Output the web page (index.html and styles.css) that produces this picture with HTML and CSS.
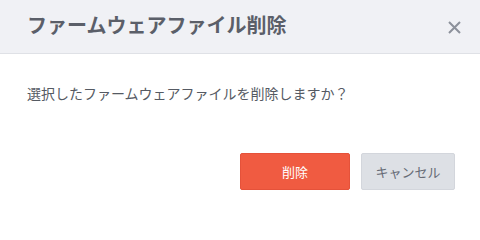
FILE: index.html
```html
<!DOCTYPE html>
<html lang="ja">
<head>
<meta charset="utf-8">
<link rel="stylesheet" href="styles.css">
</head>
<body>
<div class="dialog">
  <div class="header">
    <div class="title">ファームウェアファイル削除</div>
    <svg class="close" width="13" height="13" viewBox="0 0 13 13"><path d="M1 1L12 12M12 1L1 12" stroke="#8c919b" stroke-width="2" fill="none"/></svg>
  </div>
  <div class="body">選択したファームウェアファイルを削除しますか？</div>
  <div class="footer">
    <button class="btn btn-danger">削除</button>
    <button class="btn btn-cancel">キャンセル</button>
  </div>
</div>
</body>
</html>
```
FILE: styles.css
```css
html, body { margin: 0; padding: 0; background: #fff; }
body { font-family: "Noto Sans CJK JP", "Noto Sans", sans-serif; width: 480px; height: 204px; overflow: hidden; }
.dialog { width: 480px; }
.header {
  height: 53px;
  background: #f0f1f5;
  border-bottom: 1px solid #dfe1e6;
  display: flex;
  align-items: center;
  justify-content: space-between;
  padding: 0 19px 0 27px;
  box-sizing: content-box;
}
.title { font-size: 20px; font-weight: bold; color: #5b5f69; line-height: 24px; margin-top: -4px; }
.close { display: block; margin-top: 1px; }
.body { padding: 29px 27px 0; font-size: 14px; line-height: 20px; color: #555a63; height: 70px; }
.footer { display: flex; justify-content: flex-end; gap: 11px; padding-right: 25px; }
.btn {
  font-family: inherit; font-size: 13px; height: 37px; border-radius: 2px; padding: 0; cursor: pointer;
}
.btn-danger { width: 110px; background: #f05b41; border: 1px solid #e5523a; color: #fff; }
.btn-cancel { width: 94px; background: #dde0e5; border: 1px solid #d3d6dc; color: #666b75; }
```
